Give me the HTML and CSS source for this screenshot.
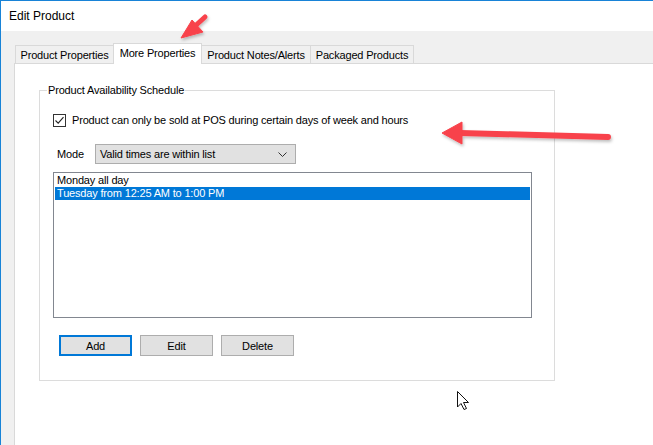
FILE: index.html
```html
<!DOCTYPE html>
<html>
<head>
<meta charset="utf-8">
<link rel="stylesheet" href="styles.css">
</head>
<body>
<div class="window">
  <div class="titlebar">Edit Product</div>
  <div class="client">
    <div class="tabs">
      <div class="tab t1">Product Properties</div>
      <div class="tab active t2">More Properties</div>
      <div class="tab t3">Product Notes/Alerts</div>
      <div class="tab t4">Packaged Products</div>
    </div>
    <div class="panel">
      <fieldset class="group">
        <legend class="group-title">Product Availability Schedule</legend>
        <div class="check-row">
          <span class="checkbox">
            <svg width="11" height="11" viewBox="0 0 11 11"><path d="M1.5 5.5 L4.2 8.2 L9.5 2.2" fill="none" stroke="#222" stroke-width="1.1"/></svg>
          </span>
          <span class="check-label">Product can only be sold at POS during certain days of week and hours</span>
        </div>
        <div class="mode-row">
          <span class="mode-label">Mode</span>
          <div class="combo">
            <span class="combo-text">Valid times are within list</span>
            <svg class="chev" width="9" height="5" viewBox="0 0 9 5"><path d="M0.5 0.5 L4.5 4.5 L8.5 0.5" fill="none" stroke="#333" stroke-width="1"/></svg>
          </div>
        </div>
        <div class="listbox">
          <div class="item">Monday all day</div>
          <div class="item selected">Tuesday from 12:25 AM to 1:00 PM</div>
        </div>
        <div class="buttons">
          <button class="btn default">Add</button>
          <button class="btn">Edit</button>
          <button class="btn">Delete</button>
        </div>
      </fieldset>
    </div>
  </div>
</div>
<svg class="overlay" width="653" height="445" viewBox="0 0 653 445">
  <defs>
    <filter id="sh" x="-20%" y="-50%" width="140%" height="200%">
      <feDropShadow dx="1" dy="2" stdDeviation="1.5" flood-color="#000" flood-opacity="0.25"/>
    </filter>
  </defs>
  <g fill="#f8434b" stroke="#f8434b" filter="url(#sh)">
    <line x1="205" y1="17" x2="194" y2="27" stroke-width="5" stroke-linecap="round"/>
    <polygon points="181,38 192,20 203,32" stroke-width="1" stroke-linejoin="round"/>
    <line x1="460" y1="133" x2="608" y2="137" stroke-width="6" stroke-linecap="round"/>
    <polygon points="442,133 462,122 462,144" stroke-width="1" stroke-linejoin="round"/>
  </g>
  <path d="M457.5 391.5 L457.5 407 L461 403.5 L464 409.5 L466.5 408.5 L463.5 402.5 L468.5 402.5 Z" fill="#fff" stroke="#111" stroke-width="1" stroke-linejoin="round"/>
</svg>
</body>
</html>
```
FILE: styles.css
```css
html, body {
  margin: 0;
  padding: 0;
}
body {
  width: 653px;
  height: 445px;
  overflow: hidden;
  position: relative;
  font-family: "Liberation Sans", Arial, sans-serif;
  font-size: 11px;
  letter-spacing: -0.17px;
  color: #000;
  background: #fff;
}
.window {
  height: 445px;
  border-left: 1px solid #1883d7;
  border-top: 1px solid #1883d7;
  box-sizing: border-box;
  display: flex;
  flex-direction: column;
}
.titlebar {
  height: 30px;
  background: #fff;
  padding-left: 8px;
  line-height: 30px;
  font-size: 12px;
  letter-spacing: 0;
  color: #000;
}
.client {
  flex: 1;
  background: #f0f0f0;
  padding: 12px 0 0 13px;
  display: flex;
  flex-direction: column;
}
.tabs {
  display: flex;
  align-items: flex-end;
  height: 20px;
  padding-left: 1px;
  position: relative;
  z-index: 1;
}
.tab {
  height: 18px;
  box-sizing: border-box;
  border: 1px solid #d9d9d9;
  border-bottom: none;
  border-right: none;
  line-height: 18px;
  background: #f0f0f0;
  white-space: nowrap;
  text-align: center;
}
.t1 { width: 98px; }
.t2 { width: 89px; }
.t3 { width: 109px; }
.t4 { width: 104px; }
.tab:last-child {
  border-right: 1px solid #d9d9d9;
}
.tab.active {
  height: 21px;
  margin-bottom: -1px;
  background: #fff;
  border-right: 1px solid #d9d9d9;
  line-height: 19px;
}
.tab.active + .tab {
  border-left: none;
  width: 108px;
}
.panel {
  flex: 1;
  background: #fff;
  border: 1px solid #d9d9d9;
  border-right: none;
  border-bottom: none;
  padding: 19px 0 0 24px;
}
.group {
  margin: 0;
  width: 516px;
  height: 298px;
  box-sizing: border-box;
  border: 1px solid #dcdcdc;
  padding: 0 0 0 13px;
  min-width: 0;
}
.group-title {
  padding: 0 1px;
  margin-left: -6px;
  line-height: 14px;
}
.check-row {
  display: flex;
  align-items: center;
  margin-top: 16px;
  height: 14px;
}
.checkbox {
  width: 13px;
  height: 13px;
  box-sizing: border-box;
  border: 1px solid #333;
  background: #fff;
  display: flex;
  align-items: center;
  justify-content: center;
}
.check-label {
  margin-left: 6px;
}
.mode-row {
  display: flex;
  align-items: center;
  margin-top: 17px;
  padding-left: 4px;
}
.mode-label {
  width: 38px;
}
.combo {
  width: 201px;
  height: 20px;
  box-sizing: border-box;
  border: 1px solid #adadad;
  background: #e1e1e1;
  display: flex;
  align-items: center;
  justify-content: space-between;
  padding: 0 8px 0 4px;
}
.listbox {
  margin-top: 8px;
  width: 479px;
  height: 146px;
  box-sizing: border-box;
  border: 1px solid #828790;
  padding: 1px;
}
.item {
  height: 13px;
  line-height: 13px;
  padding-left: 2px;
  white-space: nowrap;
}
.item.selected {
  background: #0078d7;
  color: #fff;
}
.buttons {
  display: flex;
  gap: 8px;
  margin-top: 17px;
  padding-left: 6px;
}
.btn {
  width: 73px;
  height: 21px;
  box-sizing: border-box;
  border: 1px solid #adadad;
  background: #e1e1e1;
  font-family: inherit;
  font-size: 11px;
  letter-spacing: -0.17px;
  color: #000;
  padding: 0;
  margin: 0;
}
.btn.default {
  border: 2px solid #0078d7;
}
.overlay {
  position: absolute;
  left: 0;
  top: 0;
  pointer-events: none;
}
```
